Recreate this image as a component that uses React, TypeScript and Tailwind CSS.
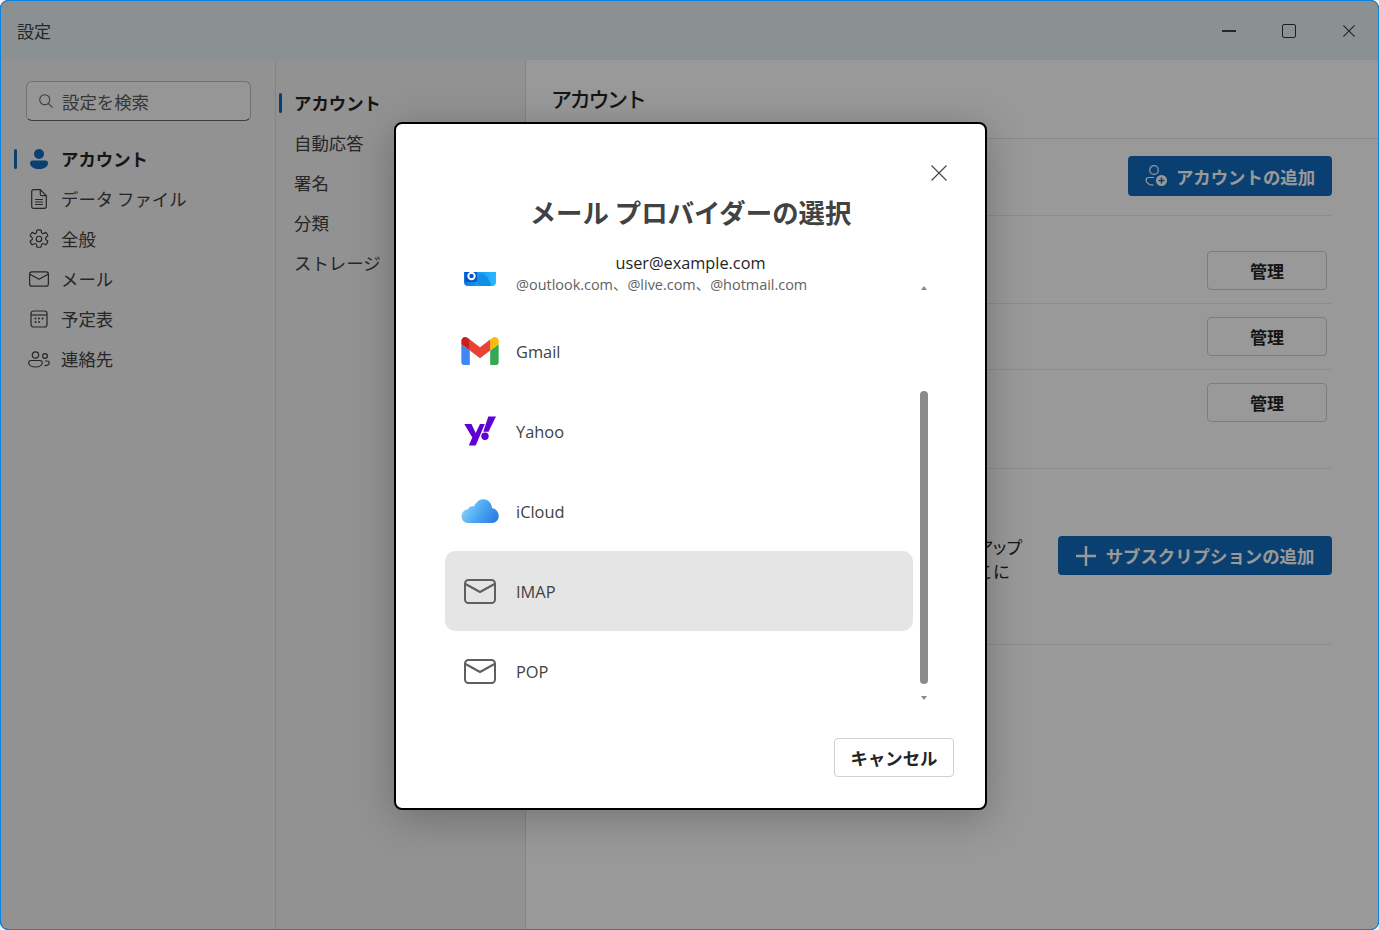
const font = { fontFamily: '"Noto Sans CJK JP", sans-serif' };
const latin = { fontFamily: '"Open Sans", "Noto Sans CJK JP", sans-serif' };

function PersonFilled() {
  return (
    <svg width="18" height="20" viewBox="0 0 18 20" fill="#0f6cbd">
      <circle cx="9" cy="5" r="5" />
      <path d="M2.500 11.500h13c1.500 0 2.500 1 2.500 2.400 0 3.600-3.800 6.100-9 6.100s-9-2.500-9-6.100c0-1.400 1-2.400 2.500-2.400z" />
    </svg>
  );
}

function FileIcon() {
  return (
    <svg width="16" height="20" viewBox="0 0 16 20" fill="none" stroke="#424242" strokeWidth="1.200">
      <path d="M2.500.7h6.800l6 6v10.800a1.800 1.800 0 0 1-1.800 1.800h-11a1.800 1.800 0 0 1-1.800-1.800V2.500A1.800 1.800 0 0 1 2.500.7z" />
      <path d="M9.300.7v4.500a1.500 1.500 0 0 0 1.500 1.500h4.500M4 10.500h8M4 13h8M4 15.500h8" />
    </svg>
  );
}

function GearIcon() {
  return (
    <svg width="22" height="22" viewBox="0 0 24 24" fill="none" stroke="#424242" strokeWidth="1.300" strokeLinejoin="round">
      <path d="M9.800 2.300a11 11 0 0 1 4.400 0l.6 2.600a1.600 1.600 0 0 0 2.300 1l2.400-1.100a10 10 0 0 1 2.200 3.800l-2 1.700a1.600 1.600 0 0 0 0 2.500l2 1.700a10 10 0 0 1-2.200 3.800l-2.400-1.100a1.600 1.600 0 0 0-2.300 1l-.6 2.600a11 11 0 0 1-4.400 0l-.6-2.600a1.600 1.600 0 0 0-2.300-1l-2.400 1.100a10 10 0 0 1-2.200-3.800l2-1.700a1.600 1.600 0 0 0 0-2.500l-2-1.700a10 10 0 0 1 2.200-3.800l2.400 1.100a1.600 1.600 0 0 0 2.300-1z" />
      <circle cx="12" cy="12" r="3" />
    </svg>
  );
}

function MailIcon({ w, h, color, sw }: { w: number; h: number; color: string; sw: number }) {
  return (
    <svg width={w} height={h} viewBox="0 0 32 25" fill="none" stroke={color} strokeWidth={sw} strokeLinejoin="round">
      <rect x="1" y="1" width="30" height="23" rx="3.500" />
      <path d="M1.500 5 16 13l14.500-8" />
    </svg>
  );
}

function CalendarIcon() {
  return (
    <svg width="18" height="18" viewBox="0 0 18 18" fill="none" stroke="#424242" strokeWidth="1.200">
      <rect x="1" y="1" width="16" height="16" rx="2.500" />
      <path d="M1 5h16" />
      <g fill="#424242" stroke="none">
        <circle cx="5.500" cy="8.500" r="1" />
        <circle cx="9" cy="8.500" r="1" />
        <circle cx="12.500" cy="8.500" r="1" />
        <circle cx="5.500" cy="12" r="1" />
        <circle cx="9" cy="12" r="1" />
      </g>
    </svg>
  );
}

function PeopleIcon() {
  return (
    <svg width="22" height="17" viewBox="0 0 22 17" fill="none" stroke="#424242" strokeWidth="1.200">
      <circle cx="7.500" cy="4" r="3.200" />
      <path d="M3 9.500h9c1.400 0 2.300.9 2.300 2.300 0 2.500-3 4.200-6.800 4.200S.7 14.300.7 11.800C.7 10.400 1.600 9.500 3 9.500z" />
      <circle cx="17" cy="5" r="2.400" />
      <path d="M17 10h2.200c1.200 0 2 .7 2 1.800 0 1.700-2 2.800-4.700 2.800" />
    </svg>
  );
}

function PersonAddIcon() {
  return (
    <svg width="23" height="22" viewBox="0 0 23 22" fill="none" stroke="#ffffff" strokeWidth="1.200">
      <circle cx="9" cy="5" r="4.300" />
      <path d="M9 12.500H4c-1.700 0-3 1-3 2.600 0 3 3.400 5 7.500 5" />
      <circle cx="16.500" cy="15.500" r="5.500" fill="#ffffff" stroke="none" />
      <path d="M16.500 12.500v6M13.500 15.500h6" stroke="#0f6cbd" strokeWidth="1.500" />
    </svg>
  );
}

function PlusIcon() {
  return (
    <svg width="20" height="20" viewBox="0 0 20 20" fill="none" stroke="#ffffff" strokeWidth="2.400">
      <path d="M10 0v20M0 10h20" />
    </svg>
  );
}

function CloseIcon({ size, color, sw }: { size: number; color: string; sw: number }) {
  return (
    <svg width={size} height={size} viewBox="0 0 16 16" fill="none" stroke={color} strokeWidth={sw}>
      <path d="M.5.500l15 15M15.500.500l-15 15" />
    </svg>
  );
}

function OutlookLogo() {
  return (
    <svg width="32" height="30" viewBox="0 0 32 30">
      <defs>
        <linearGradient id="ol" x1="0" x2="1" y1="0" y2="0">
          <stop offset="0" stopColor="#0c74e0" />
          <stop offset="0.500" stopColor="#14a0f4" />
          <stop offset="1" stopColor="#2cb8ff" />
        </linearGradient>
      </defs>
      <path d="M0 4h32v22a4 4 0 0 1-4 4H4a4 4 0 0 1-4-4z" fill="url(#ol)" />
      <path d="M17 18c5 0 8 4 10 12h-9c-3 0-5-3-5-6 0-3 1-6 4-6z" fill="#0f8fe8" />
      <path d="M1 4h12v20a2 2 0 0 1-2 2H3a2 2 0 0 1-2-2z" fill="#0a55c4" />
      <circle cx="7.500" cy="20" r="3.200" fill="none" stroke="#ffffff" strokeWidth="2" />
    </svg>
  );
}

function GmailLogo() {
  return (
    <svg width="38" height="28" viewBox="52 42 88 66">
      <path fill="#4285f4" d="M58 108h14V74L52 59v43c0 3.320 2.690 6 6 6" />
      <path fill="#34a853" d="M120 108h14c3.320 0 6-2.690 6-6V59l-20 15" />
      <path fill="#fbbc04" d="M120 48v26l20-15v-8c0-7.420-8.470-11.650-14.400-7.200" />
      <path fill="#ea4335" d="M72 74V48l24 18 24-18v26L96 92" />
      <path fill="#c5221f" d="M52 51v8l20 15V48l-5.600-4.200c-5.940-4.450-14.400-.22-14.400 7.200" />
    </svg>
  );
}

function YahooLogo() {
  return (
    <svg width="33" height="30" viewBox="464 416 33 30" fill="#6001d2">
      <polygon points="464.300,424 471.500,424 475.700,433 480,424 484.800,424 475.700,445.500 468.800,445.500 472.300,437.500" />
      <polygon points="488.300,416.500 496,416.500 488.500,431.700 483.300,431.700" />
      <circle cx="485" cy="436.300" r="3.700" />
    </svg>
  );
}

function CloudLogo() {
  return (
    <svg width="38" height="24" viewBox="0 0 38 24">
      <defs>
        <linearGradient id="cl" x1="0" x2="1" y1="0.300" y2="0.700">
          <stop offset="0" stopColor="#8dd6fb" />
          <stop offset="0.500" stopColor="#4ba8f2" />
          <stop offset="1" stopColor="#2b7fe4" />
        </linearGradient>
      </defs>
      <path
        d="M7 24C3 24 .5 21 .5 17.500.5 13.500 3.500 10.500 7 10.300 8 7.800 10.500 6.800 13 7.500 15 3 18.500.3 22.500.3 27 .3 30.500 3.800 31 9c3.800.8 6.700 4 6.700 8 0 4-2.900 7-6.700 7z"
        fill="url(#cl)"
      />
    </svg>
  );
}

const navItems = [
  { label: "アカウント", icon: <PersonFilled />, active: true },
  { label: "データ ファイル", icon: <FileIcon /> },
  { label: "全般", icon: <GearIcon /> },
  { label: "メール", icon: <MailIcon w={20} h={16} color="#424242" sw={2} /> },
  { label: "予定表", icon: <CalendarIcon /> },
  { label: "連絡先", icon: <PeopleIcon /> },
];

const subItems = ["アカウント", "自動応答", "署名", "分類", "ストレージ"];

const providers = [
  { label: "Gmail", icon: <GmailLogo /> },
  { label: "Yahoo", icon: <YahooLogo /> },
  { label: "iCloud", icon: <CloudLogo /> },
  { label: "IMAP", icon: <MailIcon w={32} h={25} color="#5f5f5f" sw={2} />, selected: true },
  { label: "POP", icon: <MailIcon w={32} h={25} color="#5f5f5f" sw={2} /> },
];

function ManageButton() {
  return (
    <button className="mr-[5px] flex h-[39px] w-[120px] items-center justify-center rounded-[4px] border border-[#d1d1d1] bg-white text-[17px] font-bold text-[#242424]">
      管理
    </button>
  );
}

export default function App() {
  return (
    <div style={font} className="relative h-[930px] w-[1379px] overflow-hidden bg-[#f3f3f3] text-[17.400px] text-[#242424]">
      <div className="flex h-full flex-col overflow-hidden rounded-[8px] border border-[#0078d4]">
        {/* title bar */}
        <div className="flex h-[59px] shrink-0 items-center justify-between bg-[#e8f1f6] pl-4 pr-[23px]">
          <span className="pt-[1px] text-[17px] text-[#424242]">設定</span>
          <div className="flex items-center gap-[46px]">
            <div className="h-[2px] w-[14px] bg-[#424242]" />
            <div className="h-[14px] w-[14px] rounded-[2px] border border-[#333333]" />
            <div className="ml-[1px]">
              <CloseIcon size={12} color="#333333" sw={1.400} />
            </div>
          </div>
        </div>

        <div className="flex min-h-0 flex-1">
          {/* left nav */}
          <div className="w-[275px] shrink-0 border-r border-[#dcdcdc] pl-[13px] pt-[21px]">
            <div className="ml-3 flex h-10 w-[225px] items-center gap-[9px] rounded-[6px] border border-[#bdbdbd] border-b-[#666666] bg-[#fbfbfb] pl-3 text-[#5c5c5c]">
              <svg width="14" height="14" viewBox="0 0 15 15" fill="none" stroke="#5c5c5c" strokeWidth="1.100">
                <circle cx="6.200" cy="6.200" r="5.400" />
                <path d="M10.200 10.200 14.500 14.500" />
              </svg>
              <span className="pt-[2px]">設定を検索</span>
            </div>
            <div className="mt-[18px]">
              {navItems.map((item) => (
                <div key={item.label} className="relative flex h-10 items-center">
                  {item.active && <div className="absolute left-0 h-5 w-[3px] rounded-full bg-[#0f6cbd]" />}
                  <div className="flex w-[47px] justify-center pl-[2px]">{item.icon}</div>
                  <span className={item.active ? "font-bold" : "text-[#424242]"}>{item.label}</span>
                </div>
              ))}
            </div>
          </div>

          {/* sub nav */}
          <div className="w-[250px] shrink-0 border-r border-[#dcdcdc] pl-[3px] pt-[23px]">
            {subItems.map((label, i) => (
              <div key={label} className="relative flex h-10 items-center pl-[15px]">
                {i === 0 && <div className="absolute left-0 h-5 w-[3px] rounded-full bg-[#0f6cbd]" />}
                <span className={i === 0 ? "font-bold" : "text-[#424242]"}>{label}</span>
              </div>
            ))}
          </div>

          {/* main */}
          <div className="min-w-0 flex-1 bg-white">
            <div className="flex h-[79px] items-center border-b border-[#e5e5e5] pb-[1px] pl-[25px] text-[21px] font-medium tracking-[-2.300px]">
              アカウント
            </div>
            <div className="pl-[25px] pr-[46px]">
              <div className="flex justify-end border-b border-[#ebebeb] pb-[19px] pt-[17px]">
                <button className="flex h-10 w-[204px] items-center justify-center gap-[8px] rounded-[4px] bg-[#0f6cbd] font-bold text-white">
                  <PersonAddIcon />
                  <span className="pt-[2px]">アカウントの追加</span>
                </button>
              </div>
              <div className="mt-[22px] flex justify-end border-b border-[#ebebeb] pb-[13px] pt-[13px]">
                <ManageButton />
              </div>
              <div className="flex justify-end border-b border-[#ebebeb] py-[13px]">
                <ManageButton />
              </div>
              <div className="flex justify-end border-b border-[#ebebeb] pb-[46px] pt-[13px]">
                <ManageButton />
              </div>
              <div className="flex items-start justify-between border-b border-[#ebebeb] pb-[61px] pt-[67px]">
                <div className="-mt-[1px] w-[469px] text-right text-[17px] leading-6">
                  <div className="tracking-[-2.500px]">メールや予定をまとめて確認できるアップ</div>
                  <div className="mr-[10px]">サブスクリプションをここに</div>
                </div>
                <button className="flex h-[39px] w-[274px] items-center justify-center gap-[10px] rounded-[4px] bg-[#0f6cbd] font-bold text-white">
                  <PlusIcon />
                  <span className="pt-[2px]">サブスクリプションの追加</span>
                </button>
              </div>
            </div>
          </div>
        </div>
      </div>

      {/* dim layer, the window's accent border stays bright on top of it */}
      <div className="absolute inset-0 rounded-[8px] border border-[#0a84e0] bg-black/40" />

      {/* dialog */}
      <div className="absolute left-[394px] top-[122px] h-[688px] w-[593px] rounded-[8px] border-2 border-black bg-white shadow-[0_8px_40px_rgba(0,0,0,0.25)]">
        <button className="absolute left-[535px] top-[41px]">
          <CloseIcon size={16} color="#424242" sw={1.100} />
        </button>
        <div className="pt-[69px] text-center text-[26.400px] font-bold leading-[38px] text-[#424242]">
          メール プロバイダーの選択
        </div>
        <div style={latin} className="mt-[20px] text-center text-[16.300px] leading-6 text-[#242424]">
          user@example.com
        </div>

        <div style={latin} className="relative mt-[-3px] h-[446px] overflow-hidden">
          {/* outlook row, scrolled mostly out of view */}
          <div className="ml-[49px] mr-[72px] mt-[-41px] flex h-[80px] items-center">
            <div className="flex w-[70px] justify-center">
              <div className="mt-[-1px]">
                <OutlookLogo />
              </div>
            </div>
            <div className="ml-[1px] pt-[28px] text-[14.450px] leading-[20px] text-[#616161]">
              @outlook.com、@live.com、@hotmail.com
            </div>
          </div>

          <div className="ml-[49px] mr-[72px]">
            {providers.map((p) => (
              <div key={p.label} className={`flex h-20 items-center rounded-[10px] ${p.selected ? "bg-[#e5e5e5]" : ""}`}>
                <div className="flex w-[70px] justify-center">{p.icon}</div>
                <span className="ml-[1px] pt-[3px] text-[16.400px] text-[#424242]">{p.label}</span>
              </div>
            ))}
          </div>

          {/* scrollbar */}
          <div className="absolute left-[525px] top-[14px] h-0 w-0 border-x-[3px] border-b-[4px] border-x-transparent border-b-[#8a8a8a]" />
          <div className="absolute left-[524px] top-[119px] h-[293px] w-2 rounded-full bg-[#8a8a8a]" />
          <div className="absolute left-[525px] top-[424px] h-0 w-0 border-x-[3px] border-t-[4px] border-x-transparent border-t-[#8a8a8a]" />
        </div>

        <button className="absolute left-[438px] top-[614px] flex h-[39px] w-[120px] items-center justify-center rounded-[4px] border border-[#d1d1d1] bg-white pt-[2px] font-bold text-[#242424]">
          キャンセル
        </button>
      </div>
    </div>
  );
}
